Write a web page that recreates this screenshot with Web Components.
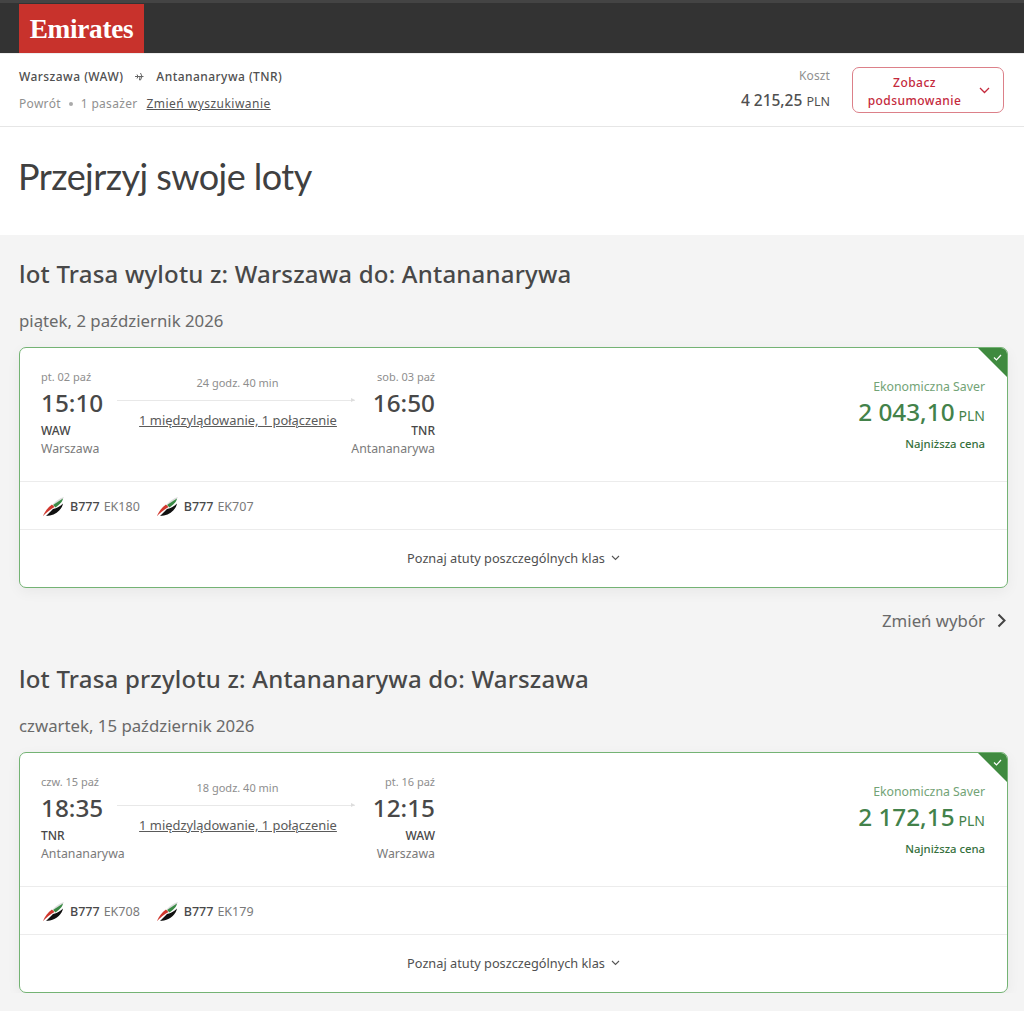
<!DOCTYPE html>
<html lang="pl">
<head>
<meta charset="utf-8">
<title>Emirates</title>
<style>
html, body { margin: 0; background: #f4f4f4; }
body { font-family: "Noto Sans", sans-serif; color: #444; }
</style>
</head>
<body>
<ek-header></ek-header>
<ek-summary cost="4 215,25"></ek-summary>
<ek-title>Przejrzyj swoje loty</ek-title>
<ek-section heading="lot Trasa wylotu z: Warszawa do: Antananarywa" date="piątek, 2 październik 2026">
  <ek-flight dep-date="pt. 02 paź" dep-time="15:10" dep-code="WAW" dep-city="Warszawa"
    arr-date="sob. 03 paź" arr-time="16:50" arr-code="TNR" arr-city="Antananarywa"
    duration="24 godz. 40 min" price="2 043,10" f1="EK180" f2="EK707"></ek-flight>
</ek-section>
<ek-change>Zmień wybór</ek-change>
<ek-section heading="lot Trasa przylotu z: Antananarywa do: Warszawa" date="czwartek, 15 październik 2026">
  <ek-flight dep-date="czw. 15 paź" dep-time="18:35" dep-code="TNR" dep-city="Antananarywa"
    arr-date="pt. 16 paź" arr-time="12:15" arr-code="WAW" arr-city="Warszawa"
    duration="18 godz. 40 min" price="2 172,15" f1="EK708" f2="EK179"></ek-flight>
</ek-section>

<script>
class EkHeader extends HTMLElement {
  constructor() {
    super();
    this.attachShadow({ mode: 'open' }).innerHTML = `
<style>
:host { display: block; height: 53px; box-sizing: border-box; background: #333; border-top: 3px solid #444; padding: 1px 0 0 19px; }
.logo {
  width: 125px; height: 49px; padding-top: 3px; box-sizing: border-box;
  background: #c8322c; color: #fff;
  display: flex; align-items: center; justify-content: center;
  font: bold 27.300px/1 "Liberation Serif", serif; letter-spacing: -.3px;
}
</style>
<div class="logo">Emirates</div>`;
  }
}

class EkSummary extends HTMLElement {
  constructor() {
    super();
    this.attachShadow({ mode: 'open' }).innerHTML = `
<style>
:host { display: flex; justify-content: space-between; height: 74px; box-sizing: border-box; background: #fff; border-bottom: 1px solid #e6e6e6; border-top: 1px solid #eee; padding: 0 20px 0 19px; }
.route { display: flex; align-items: center; font-size: 12px; font-weight: 500; letter-spacing: .45px; color: #505050; height: 17px; margin-top: 14px; }
.route svg { margin: 0 12px; }
.meta { display: flex; align-items: center; font-size: 12px; letter-spacing: .3px; color: #909090; margin-top: 10px; height: 17px; }
.dot { width: 4px; height: 4px; border-radius: 50%; background: #aaa; margin: 0 8px; }
a { color: #555; text-decoration: underline; margin-left: 9px; letter-spacing: .47px; }
.right { display: flex; }
.cost { text-align: right; margin-top: 13px; }
.cost .label { font-size: 12px; color: #909090; line-height: 17px; letter-spacing: .1px; }
.cost .val { font-size: 15.500px; font-weight: 500; color: #505050; line-height: 20px; margin-top: 6px; }
.cost small { font-size: 12.500px; font-weight: 400; }
button {
  all: unset; box-sizing: border-box; width: 152px; height: 46px; margin: 13px 0 0 22px;
  border: 1px solid #dc8089; border-radius: 7px;
  display: flex; align-items: center; font: 500 12px/18px "Noto Sans", sans-serif; text-align: center; color: #c4293c; letter-spacing: .45px;
}
button span { width: 123px; padding-top: 3px; }
button svg { margin-left: 3px; }
</style>
<div>
  <div class="route">Warszawa (WAW)
    <svg width="9" height="9" viewBox="0 0 9 9"><path d="M0 4.500h8.500M5.500 1l1.500 3.500L5.500 8H4.500l.5-3.500M2 2.500l1 2-1 2" fill="none" stroke="#666" stroke-width="1"/></svg>
    Antananarywa (TNR)</div>
  <div class="meta">Powrót<span class="dot"></span>1 pasażer <a>Zmień wyszukiwanie</a></div>
</div>
<div class="right">
  <div class="cost"><div class="label">Koszt</div><div class="val">${this.getAttribute('cost')} <small>PLN</small></div></div>
  <button><span>Zobacz podsumowanie</span><svg width="11" height="7" viewBox="0 0 11 7"><path d="M1 1l4.500 4.500L10 1" fill="none" stroke="#c4293c" stroke-width="1.300"/></svg></button>
</div>`;
  }
}

class EkTitle extends HTMLElement {
  constructor() {
    super();
    this.attachShadow({ mode: 'open' }).innerHTML = `
<style>
:host { display: block; height: 108px; box-sizing: border-box; background: #fff; padding: 24px 18px 0; }
h1 { margin: 0; font: 400 36px/50px "Lato", sans-serif; color: #404040; letter-spacing: -.55px; }
</style>
<h1><slot></slot></h1>`;
  }
}

class EkSection extends HTMLElement {
  constructor() {
    super();
    this.attachShadow({ mode: 'open' }).innerHTML = `
<style>
:host { display: block; padding: 22px 16px 0 19px; }
h2 { margin: 0; font: 500 24px/34px "Noto Sans", sans-serif; color: #484848; letter-spacing: .2px; }
.date { font-size: 16.800px; line-height: 24px; color: #6a6a6a; margin: 18px 0 14px; }
</style>
<h2>${this.getAttribute('heading')}</h2>
<div class="date">${this.getAttribute('date')}</div>
<slot></slot>`;
  }
}

const tailLogo = `<svg width="21" height="19" viewBox="0 0 21 19">
<path d="M10 7 C13 4 17 1 21 0 L20 2 L11 8Z" fill="#ddd"/>
<path d="M10 8 L20 1.500 C19.500 4 18 6.500 12.500 10.500Z" fill="#3a8a45"/>
<path d="M0 19 C2 14 5 10.500 9 7.500 L11.500 10 C7 12.500 3 16 0 19Z" fill="#d0382e"/>
<path d="M10 12 C14 11 17 9.500 20 6.500 C19 12 14 17 7 18.500 L3 19Z" fill="#111"/>
</svg>`;

class EkFlight extends HTMLElement {
  constructor() {
    super();
    const a = n => this.getAttribute(n);
    this.attachShadow({ mode: 'open' }).innerHTML = `
<style>
:host { display: block; position: relative; height: 241px; box-sizing: border-box; background: #fff; border: 1px solid #74b374; border-radius: 7px; box-shadow: 0 4px 14px rgba(0,0,0,.05); overflow: hidden; }
.top { height: 134px; box-sizing: border-box; display: flex; justify-content: space-between; padding: 21px 22px 0 21px; border-bottom: 1px solid #ececec; }
.trip { display: flex; }
.pt { width: 84px; flex: none; }
.pt:first-child { width: 83px; }
.pt.end { text-align: right; }
.d { font-size: 11px; line-height: 16px; color: #8e8e8e; }
.t { font-size: 24.300px; line-height: 32px; font-weight: 500; color: #484848; margin-top: 2px; }
.c { font-size: 12px; line-height: 18px; font-weight: 500; color: #484848; margin-top: 3px; }
.n { font-size: 12.300px; line-height: 18px; color: #7a7a7a; white-space: nowrap; }
.mid { width: 238px; flex: none; margin: 0 -4px 0 -7px; text-align: center; }
.dur { font-size: 11px; line-height: 16px; color: #8e8e8e; margin-top: 6px; padding-left: 3px; }
.line { position: relative; height: 1px; background: #e8e8e8; margin: 9px 0 0; }
.line::after { content: ""; position: absolute; right: 0; top: -2px; border-left: 4px solid #ddd; border-top: 2.500px solid transparent; border-bottom: 2.500px solid transparent; }
.stops { font-size: 12.900px; line-height: 18px; color: #5a5a5a; text-decoration: underline; margin-top: 10px; padding-left: 4px; white-space: nowrap; }
.price { text-align: right; }
.cls { font-size: 12.300px; line-height: 18px; color: #72a376; margin-top: 9px; }
.amt { font-size: 24.300px; line-height: 32px; font-weight: 500; color: #43824a; }
.amt small { font-size: 14px; font-weight: 400; margin-left: 4px; }
.low { font-size: 11.300px; line-height: 16px; font-weight: 500; color: #35703c; margin-top: 4px; }
.corner { position: absolute; top: 0; right: 0; width: 29px; height: 29px; }
.fl { height: 48px; box-sizing: border-box; border-bottom: 1px solid #ececec; display: flex; align-items: center; padding: 1px 0 0 23px; font-size: 12.500px; color: #484848; }
.fl b { font-weight: 500; margin-left: 6px; }
.fl span { color: #7a7a7a; margin: 0 17px 0 4px; }
.fl svg { flex: none; }
.more { height: 57px; display: flex; align-items: center; justify-content: center; font-size: 12.750px; color: #505050; box-sizing: border-box; padding-bottom: 2px; }
.more svg { margin-left: 6px; }
</style>
<div class="top">
  <div class="trip">
    <div class="pt"><div class="d">${a('dep-date')}</div><div class="t">${a('dep-time')}</div><div class="c">${a('dep-code')}</div><div class="n">${a('dep-city')}</div></div>
    <div class="mid"><div class="dur">${a('duration')}</div><div class="line"></div><div class="stops">1 międzylądowanie, 1 połączenie</div></div>
    <div class="pt end"><div class="d">${a('arr-date')}</div><div class="t">${a('arr-time')}</div><div class="c">${a('arr-code')}</div><div class="n">${a('arr-city')}</div></div>
  </div>
  <div class="price"><div class="cls">Ekonomiczna Saver</div><div class="amt">${a('price')}<small>PLN</small></div><div class="low">Najniższa cena</div></div>
</div>
<svg class="corner" viewBox="0 0 29 29"><path d="M0 0H29V29Z" fill="#3f8a3f"/><path d="M16 9.500l2.500 2.500L23 7" fill="none" stroke="#fff" stroke-width="1.200"/></svg>
<div class="fl">${tailLogo}<b>B777</b><span>${a('f1')}</span>${tailLogo}<b>B777</b><span>${a('f2')}</span></div>
<div class="more">Poznaj atuty poszczególnych klas<svg width="9" height="6" viewBox="0 0 9 6"><path d="M1 1l3.500 3.500L8 1" fill="none" stroke="#555" stroke-width="1.100"/></svg></div>`;
  }
}

class EkChange extends HTMLElement {
  constructor() {
    super();
    this.attachShadow({ mode: 'open' }).innerHTML = `
<style>
:host { display: flex; justify-content: flex-end; align-items: center; height: 24px; margin: 20px 0 8px; padding-right: 18px; font-size: 16.800px; color: #6a6a6a; }
svg { margin-left: 12px; }
</style>
<slot></slot><svg width="9" height="15" viewBox="0 0 9 15"><path d="M1.500 1.500l6 6-6 6" fill="none" stroke="#444" stroke-width="2"/></svg>`;
  }
}

customElements.define('ek-header', EkHeader);
customElements.define('ek-summary', EkSummary);
customElements.define('ek-title', EkTitle);
customElements.define('ek-section', EkSection);
customElements.define('ek-flight', EkFlight);
customElements.define('ek-change', EkChange);
</script>
</body>
</html>
